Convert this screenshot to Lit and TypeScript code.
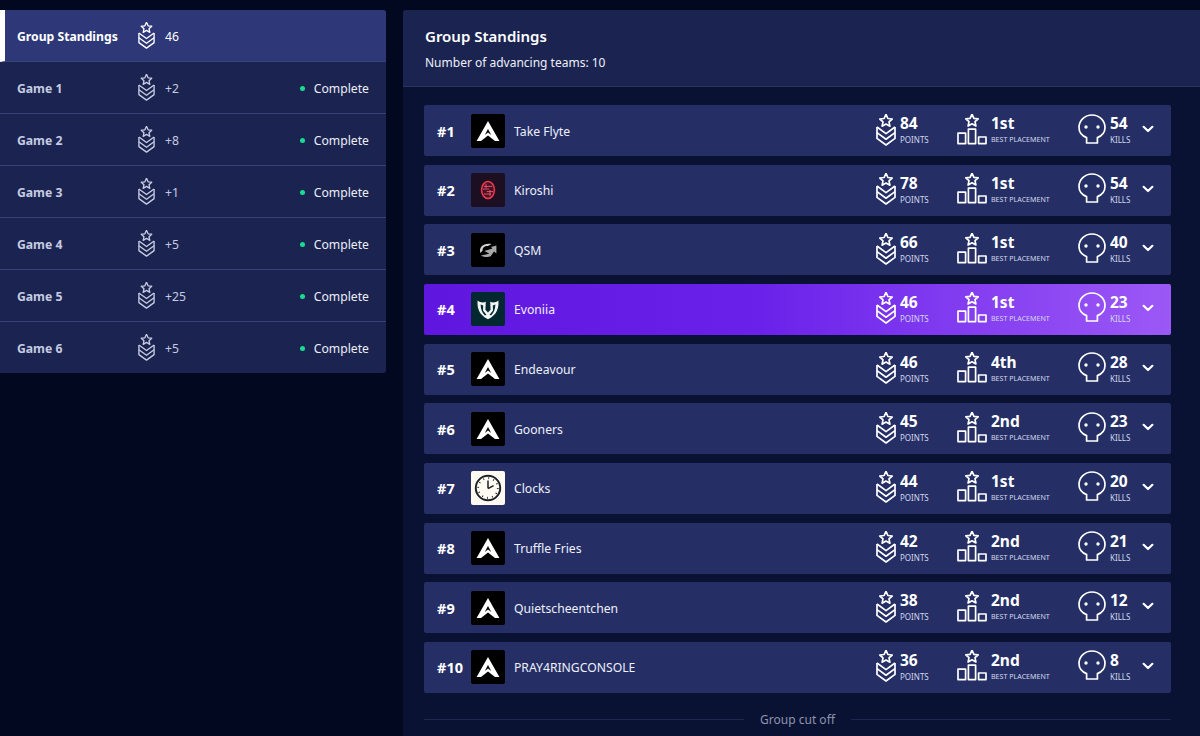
import { LitElement, html, svg, css } from 'lit';
import { customElement } from 'lit/decorators.js';

type Logo = 'apex' | 'kiroshi' | 'qsm' | 'evoniia' | 'clock';

interface Team {
  name: string;
  logo: Logo;
  points: number;
  best: string;
  kills: number;
}

const games = [
  { name: 'Game 1', delta: '+2' },
  { name: 'Game 2', delta: '+8' },
  { name: 'Game 3', delta: '+1' },
  { name: 'Game 4', delta: '+5' },
  { name: 'Game 5', delta: '+25' },
  { name: 'Game 6', delta: '+5' },
];

const teams: Team[] = [
  { name: 'Take Flyte', logo: 'apex', points: 84, best: '1st', kills: 54 },
  { name: 'Kiroshi', logo: 'kiroshi', points: 78, best: '1st', kills: 54 },
  { name: 'QSM', logo: 'qsm', points: 66, best: '1st', kills: 40 },
  { name: 'Evoniia', logo: 'evoniia', points: 46, best: '1st', kills: 23 },
  { name: 'Endeavour', logo: 'apex', points: 46, best: '4th', kills: 28 },
  { name: 'Gooners', logo: 'apex', points: 45, best: '2nd', kills: 23 },
  { name: 'Clocks', logo: 'clock', points: 44, best: '1st', kills: 20 },
  { name: 'Truffle Fries', logo: 'apex', points: 42, best: '2nd', kills: 21 },
  { name: 'Quietscheentchen', logo: 'apex', points: 38, best: '2nd', kills: 12 },
  { name: 'PRAY4RINGCONSOLE', logo: 'apex', points: 36, best: '2nd', kills: 8 },
];

const STAR = 'M0 -6.4 L1.9 -2.3 L6.2 -1.8 L3 1.1 L3.9 5.4 L0 3.2 L-3.9 5.4 L-3 1.1 L-6.2 -1.8 L-1.9 -2.3 Z';

// star sitting on top of three stacked chevrons, the outer one closes the shield
const medal = (w: number, h: number, sw: number) => html`
  <svg class="icon medal" width=${w} height=${h} viewBox="0 0 20 32" fill="none" stroke="currentColor" stroke-width=${sw} stroke-linejoin="round">
    <path d=${STAR} transform="translate(10 6.8)" />
    <path d="M1 13 V24.4 L10 31 L19 24.4 V13" />
    <path d="M1 13 L10 19.6 L19 13" />
    <path d="M1 18.6 L10 25.2 L19 18.6" />
  </svg>
`;

const podium = html`
  <svg class="icon up" width="30" height="32" viewBox="0 0 30 32" fill="none" stroke="currentColor" stroke-width="1.7" stroke-linejoin="round">
    <path d=${STAR} transform="translate(15 6.6)" />
    <rect x="1" y="19.2" width="7.6" height="10.4" />
    <rect x="11.4" y="15.2" width="7.2" height="14.4" />
    <rect x="21.6" y="23" width="7.4" height="6.6" />
  </svg>
`;

const skull = html`
  <svg class="icon skull" width="28" height="30" viewBox="0 0 28 30" fill="none" stroke="currentColor" stroke-width="1.7" stroke-linejoin="round">
    <path d="M8.6 23.6 C3.8 21.6 1 17.8 1 13.4 C1 6.4 6.8 1 14 1 C21.2 1 27 6.4 27 13.4 C27 17.8 24.2 21.6 19.4 23.6 V29 H8.6 Z" />
    <circle cx="8" cy="13" r="1.7" fill="currentColor" stroke="none" />
    <circle cx="20" cy="13" r="1.7" fill="currentColor" stroke="none" />
  </svg>
`;

const chevron = html`
  <svg class="chevron" width="12" height="8" viewBox="0 0 12 8" fill="none" stroke="currentColor" stroke-width="2.2" stroke-linecap="round" stroke-linejoin="round">
    <path d="M1.6 1.8 L6 6 L10.4 1.8" />
  </svg>
`;

const logoArt: Record<Logo, unknown> = {
  apex: svg`<path d="M17 7 L28.4 27 L24 27 L17 21.6 L10 27 L5.6 27 Z M17 15 L13.8 21 L17 18.6 L20.2 21 Z" fill="#fff" fill-rule="evenodd" />`,
  kiroshi: svg`
    <ellipse cx="17" cy="17" rx="7.6" ry="9.6" fill="#e0203c" opacity="0.22" />
    <ellipse cx="17" cy="17" rx="6.4" ry="8.4" fill="none" stroke="#f0394f" stroke-width="1.5" />
    <path d="M12.8 13.4 H21.2 M12 16 H18 M15.6 18.6 H22 M13 21 H20 M15 10.8 V15 M19 17 V23" stroke="#f25a6a" stroke-width="0.9" fill="none" />
  `,
  qsm: svg`
    <path d="M9.4 20 C7.4 13.6 13.4 9.4 20.6 11 L17 13 C13.8 12.8 11.4 14.6 11.6 17.4 Z" fill="#d2d2d2" />
    <path d="M25.4 12.4 L25.4 20.6 L23 18.6 L19.4 23.6 C16 24.6 12.6 24 10 22.4 L18.4 20.8 L13.4 18 L21.4 15.4 L20 14 Z" fill="#a8a8a8" />
  `,
  evoniia: svg`
    <path d="M6.6 8.4 C9.4 10.6 12 10.8 14.8 9.8 L14.4 17.8 L17 20.4 L19.6 17.8 L19.2 9.8 C22 10.8 24.6 10.6 27.4 8.4 C28 15.6 26.4 22.4 17 27.2 C7.6 22.4 6 15.6 6.6 8.4 Z M9.6 12.6 L12.2 13.4 L12 18.6 L15.4 22.8 L14 23.4 C11 21 9.8 17 9.6 12.6 Z M24.4 12.6 L21.8 13.4 L22 18.6 L18.6 22.8 L20 23.4 C23 21 24.2 17 24.4 12.6 Z" fill="#f2f6f5" fill-rule="evenodd" />
  `,
  clock: svg`
    <circle cx="17" cy="17" r="12.2" fill="#fdfbf2" stroke="#1d2226" stroke-width="2" />
    <circle cx="17" cy="17" r="9.8" fill="none" stroke="#1d2226" stroke-width="1.8" stroke-dasharray="0.9 4.23" />
    <path d="M17 17.6 V9.6 M17 17.6 L22.6 14.6" stroke="#1d2226" stroke-width="1.5" fill="none" />
  `,
};

@customElement('app-root')
export class AppRoot extends LitElement {
  static styles = css`
    :host {
      display: block;
      width: 1200px;
      height: 736px;
      overflow: hidden;
      background: #020820;
      color: #fff;
      font-family: 'Noto Sans', 'Open Sans', sans-serif;
      font-size: 12.2px;
    }
    .page {
      display: grid;
      grid-template-columns: 386px 1fr;
      column-gap: 17px;
      padding-top: 10px;
      height: 726px;
    }

    .side {
      align-self: start;
      background: #1b2450;
      border-radius: 0 3px 3px 0;
      overflow: hidden;
    }
    .tab {
      display: flex;
      align-items: center;
      height: 51px;
      padding: 0 17px;
      border-bottom: 1px solid #39427a;
      color: #c6cbe2;
    }
    .tab:last-child {
      border-bottom: none;
    }
    .tab.active {
      background: #2e3878;
      border-left: 5px solid #fff;
      padding-left: 12px;
      color: #fff;
    }
    .tab-name {
      width: 121px;
      padding-top: 1px;
      font-weight: 700;
    }
    .tab .icon {
      margin-right: 10px;
    }
    .tab-value {
      padding-top: 1px;
    }
    .tab-status {
      display: flex;
      align-items: center;
      margin-left: auto;
      padding-top: 1px;
      color: #eceef8;
    }
    .dot {
      width: 5px;
      height: 5px;
      border-radius: 50%;
      background: #17dc93;
      margin-right: 9px;
    }

    .main {
      background: #0a1233;
      border-radius: 3px 0 0 0;
      overflow: hidden;
    }
    .main-head {
      height: 77px;
      box-sizing: border-box;
      padding: 13px 22px 0;
      background: #1b2450;
      border-bottom: 1px solid #2a3364;
    }
    h1 {
      margin: 0 0 5px;
      font-size: 15px;
      line-height: 26px;
      font-weight: 600;
    }
    .main-head p {
      margin: 0;
      font-size: 12px;
      line-height: 18px;
      color: #eef0fa;
    }
    .rows {
      display: flex;
      flex-direction: column;
      gap: 8.67px;
      padding: 18px 29px 0 21px;
    }
    .row {
      display: flex;
      align-items: center;
      height: 51px;
      padding: 0 17px 0 13px;
      background: #252f66;
      border-radius: 2px;
      color: #eef0fa;
    }
    .row.hot {
      background: linear-gradient(90deg, #5f17df 0%, #6a22ea 45%, #9c58f6 100%);
    }
    .rank {
      width: 34px;
      font-size: 14.5px;
      font-weight: 700;
      color: #fff;
    }
    .logo {
      width: 34px;
      height: 34px;
      border-radius: 2px;
      background: #000;
      margin-right: 9px;
    }
    .logo.kiroshi {
      background: #1c0f22;
    }
    .logo.evoniia {
      background: #042830;
    }
    .logo.clock {
      background: #fdfbf2;
    }
    .name {
      margin-right: auto;
      padding-top: 1px;
    }
    .stat {
      display: flex;
      align-items: center;
      color: #fff;
    }
    .stat.points {
      width: 81px;
    }
    .stat.best {
      width: 121px;
    }
    .stat.kills {
      width: 64px;
    }
    .stat .medal,
    .stat .up {
      margin-top: -2px;
    }
    .stat .skull {
      margin-top: -4px;
    }
    .stat-text {
      display: flex;
      flex-direction: column;
      margin: -2px 0 0 4px;
    }
    .num {
      font-size: 15.5px;
      font-weight: 700;
      line-height: 19px;
    }
    .label {
      margin-top: 1px;
      font-size: 8px;
      line-height: 11px;
      color: #d3d7ec;
      white-space: nowrap;
    }
    .stat.best .label {
      font-size: 7.1px;
    }
    .chevron {
      margin-top: -3px;
      color: #fff;
    }
    .cut {
      display: flex;
      align-items: center;
      gap: 16px;
      margin: 18px 29px 0 21px;
      color: #8e94ad;
      font-size: 12px;
      line-height: 18px;
    }
    .cut::before,
    .cut::after {
      content: '';
      flex: 1;
      height: 1px;
      background: #1f2850;
    }
  `;

  render() {
    return html`
      <div class="page">
        <nav class="side">
          <div class="tab active">
            <span class="tab-name">Group Standings</span>
            ${medal(17, 27, 1.6)}
            <span class="tab-value">46</span>
          </div>
          ${games.map(
            (g) => html`
              <div class="tab">
                <span class="tab-name">${g.name}</span>
                ${medal(17, 27, 1.6)}
                <span class="tab-value">${g.delta}</span>
                <span class="tab-status"><span class="dot"></span>Complete</span>
              </div>
            `,
          )}
        </nav>
        <section class="main">
          <header class="main-head">
            <h1>Group Standings</h1>
            <p>Number of advancing teams: 10</p>
          </header>
          <div class="rows">
            ${teams.map(
              (t, i) => html`
                <div class="row ${i === 3 ? 'hot' : ''}">
                  <span class="rank">#${i + 1}</span>
                  <svg class="logo ${t.logo}" viewBox="0 0 34 34">${logoArt[t.logo]}</svg>
                  <span class="name">${t.name}</span>
                  <div class="stat points">
                    ${medal(20, 32, 1.7)}
                    <div class="stat-text">
                      <span class="num">${t.points}</span>
                      <span class="label">POINTS</span>
                    </div>
                  </div>
                  <div class="stat best">
                    ${podium}
                    <div class="stat-text">
                      <span class="num">${t.best}</span>
                      <span class="label">BEST PLACEMENT</span>
                    </div>
                  </div>
                  <div class="stat kills">
                    ${skull}
                    <div class="stat-text">
                      <span class="num">${t.kills}</span>
                      <span class="label">KILLS</span>
                    </div>
                  </div>
                  ${chevron}
                </div>
              `,
            )}
          </div>
          <div class="cut">Group cut off</div>
        </section>
      </div>
    `;
  }
}
